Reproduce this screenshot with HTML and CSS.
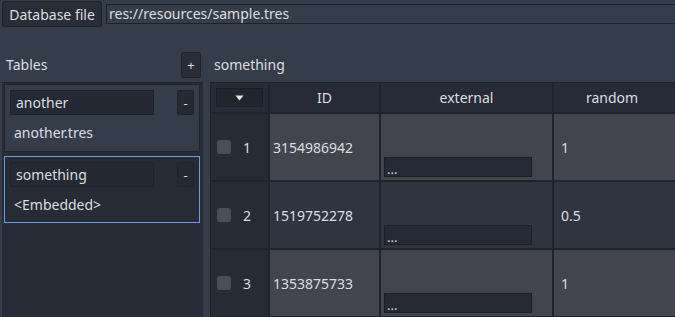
FILE: index.html
```html
<!DOCTYPE html>
<html>
<head>
<meta charset="utf-8">
<link rel="stylesheet" href="styles.css">
</head>
<body>
<div class="top">
  <div class="btn dbbtn">Database file</div>
  <div class="path">res://resources/sample.tres</div>
</div>
<div class="bar">
  <div class="tables-head">
    <span class="label">Tables</span>
    <div class="btn plus">+</div>
  </div>
  <span class="label cur">something</span>
</div>
<div class="main">
  <div class="side">
    <div class="item">
      <div class="item-row">
        <div class="edit">another</div>
        <div class="btn minus">-</div>
      </div>
      <div class="item-sub">another.tres</div>
    </div>
    <div class="item sel">
      <div class="item-row">
        <div class="edit">something</div>
        <div class="btn minus">-</div>
      </div>
      <div class="item-sub">&lt;Embedded&gt;</div>
    </div>
  </div>
  <div class="table">
    <div class="hcell first"><div class="drop"><svg width="9" height="6" viewBox="0 0 9 6"><polygon points="0.5,0.5 8.5,0.5 4.5,5.5" fill="#e6e6e6"/></svg></div></div>
    <div class="hcell">ID</div>
    <div class="hcell">external</div>
    <div class="hcell last">random</div>

    <div class="rcell"><span class="chk"></span><span class="num">1</span></div>
    <div class="cell light id">3154986942</div>
    <div class="cell light ext"><div class="res">...</div></div>
    <div class="cell light val">1</div>

    <div class="rcell"><span class="chk"></span><span class="num">2</span></div>
    <div class="cell dark id">1519752278</div>
    <div class="cell dark ext"><div class="res">...</div></div>
    <div class="cell dark val">0.5</div>

    <div class="rcell"><span class="chk"></span><span class="num">3</span></div>
    <div class="cell light id">1353875733</div>
    <div class="cell light ext"><div class="res">...</div></div>
    <div class="cell light val">1</div>
  </div>
</div>
</body>
</html>
```
FILE: styles.css
```css
html, body {
  margin: 0;
  padding: 0;
  height: 100%;
  overflow: hidden;
}
body {
  background: #363d4a;
  font-family: "Noto Sans", "DejaVu Sans", sans-serif;
  font-size: 14px;
  color: #dcdee1;
}
.btn {
  box-sizing: border-box;
  background: #282d38;
  border: 1px solid #1f232b;
  border-radius: 2px;
  display: flex;
  align-items: center;
  justify-content: center;
}
.top {
  display: flex;
  align-items: flex-start;
  padding: 1px 0 0 2px;
  height: 52px;
  box-sizing: border-box;
}
.dbbtn {
  width: 100px;
  height: 26px;
}
.path {
  box-sizing: border-box;
  margin: 3px 0 0 4px;
  flex: 1;
  height: 20px;
  border: 1px solid #1d2128;
  border-right: none;
  padding-left: 2px;
  line-height: 17px;
}
.bar {
  display: flex;
  align-items: center;
  height: 26px;
}
.tables-head {
  width: 202px;
  display: flex;
  align-items: center;
  justify-content: space-between;
  padding-left: 6px;
  padding-right: 1px;
  box-sizing: border-box;
}
.label {
  line-height: 24px;
}
.plus {
  width: 20px;
  height: 26px;
  font-size: 13px;
}
.cur {
  margin-left: 12px;
}
.main {
  display: flex;
  margin-top: 4px;
  height: 235px;
}
.side {
  margin-left: 2px;
  width: 201px;
  box-sizing: border-box;
  background: #262b35;
  border-top: 1px solid #1f232b;
  padding: 1px 2px 0 2px;
  display: flex;
  flex-direction: column;
  gap: 4px;
}
.item {
  box-sizing: border-box;
  height: 68px;
  width: 196px;
  background: #363d4a;
  border: 1px solid #20242c;
  padding: 5px 5px 0 5px;
}
.item.sel {
  height: 67px;
  background: #262b36;
  border-color: #699ce8;
}
.item-row {
  display: flex;
  justify-content: space-between;
}
.edit {
  box-sizing: border-box;
  width: 144px;
  height: 25px;
  background: #242933;
  border: 1px solid #1e222a;
  padding-left: 5px;
  line-height: 24px;
}
.minus {
  width: 17px;
  height: 25px;
  background: #242933;
  font-size: 13px;
}
.item-sub {
  padding-left: 4px;
  margin-top: 4px;
  line-height: 27px;
}
.table {
  margin-left: 7px;
  flex: 1;
  display: grid;
  grid-template-columns: 57px 109px 171px 1fr;
  grid-template-rows: 29px 66px 66px 66px;
  gap: 2px;
  padding: 1px 0 0 1px;
  background: #1f232b;
}
.hcell {
  background: #262b37;
  display: flex;
  align-items: center;
  justify-content: center;
}
.hcell.last {
  padding-right: 5px;
}
.hcell.first {
  justify-content: flex-start;
  align-items: flex-start;
  padding: 5px 0 0 5px;
}
.drop {
  box-sizing: border-box;
  width: 47px;
  height: 19px;
  background: #21252e;
  border: 1px solid #1b1e25;
  display: flex;
  align-items: center;
  justify-content: center;
}
.rcell {
  background: #262b36;
  display: flex;
  align-items: center;
  padding-left: 6px;
}
.chk {
  width: 14px;
  height: 14px;
  border-radius: 3px;
  background: #4a4f59;
}
.num {
  margin-left: 12px;
}
.cell {
  display: flex;
  align-items: center;
}
.cell.light { background: #42454e; }
.cell.dark { background: #2f3441; }
.cell.id { padding-left: 3px; }
.cell.val { padding-left: 7px; }
.cell.ext {
  align-items: flex-end;
  padding: 0 0 3px 3px;
}
.res {
  box-sizing: border-box;
  width: 148px;
  height: 20px;
  background: #262a36;
  border: 1px solid #1c1f26;
  padding-left: 2px;
  line-height: 22px;
  font-size: 13px;
}
```
